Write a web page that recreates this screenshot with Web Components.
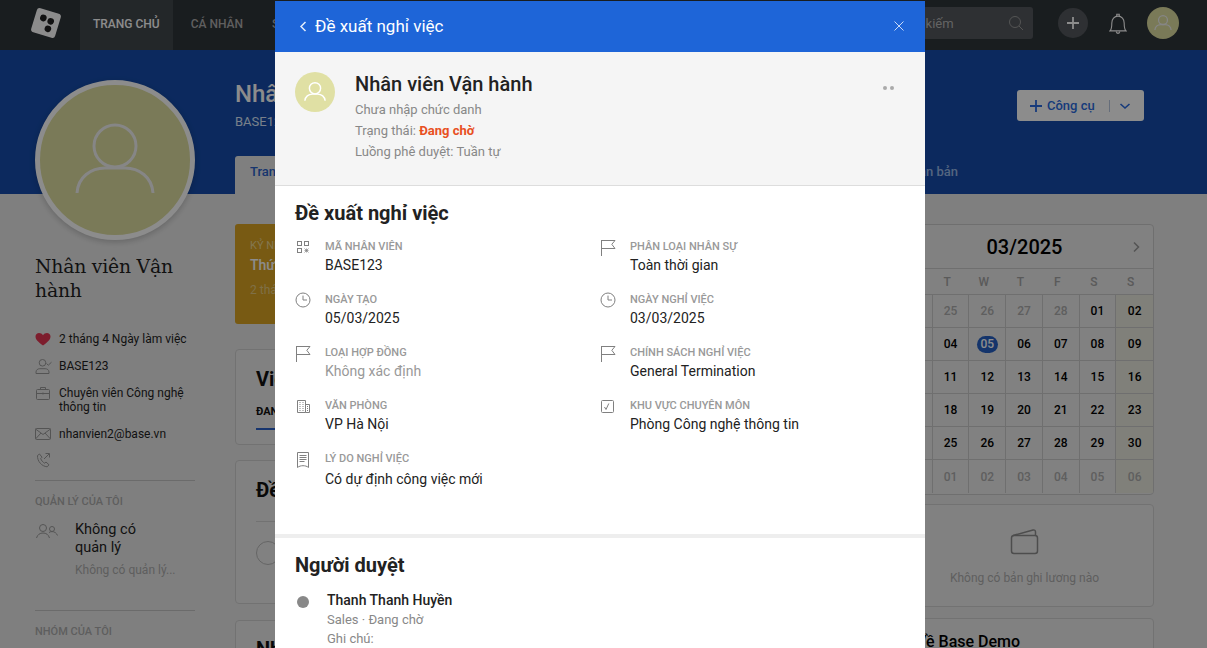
<!DOCTYPE html>
<html lang="vi">
<head>
<meta charset="utf-8">
<title>Đề xuất nghỉ việc</title>
<style>
html,body{margin:0;height:648px;overflow:hidden;background:#e8e8e8;font-family:Roboto,"Noto Sans",sans-serif;color:#222}
</style>
</head>
<body>
<app-page></app-page>
<modal-layer>
  <request-panel></request-panel>
</modal-layer>
<script>
const ICONS={
 flag:'<path d="M1.500 1v16M1.500 1.500H15l-3.200 3.800L15 9.500H1.500" fill="none" stroke="currentColor"/>',
 clock:'<circle cx="8" cy="8" r="7" fill="none" stroke="currentColor"/><path d="M8 3.600V8h4" fill="none" stroke="currentColor"/>',
 qr:'<g fill="none" stroke="currentColor"><rect x="2.500" y="2.500" width="4" height="4"/><rect x="9.500" y="2.500" width="4" height="4"/><rect x="2.500" y="9.500" width="4" height="4"/></g><path d="M9.500 9.500l4 4M13.500 9.500l-4 4M11.500 9.500v4M9.500 11.500h4" stroke="currentColor" stroke-width=".7"/>',
 building:'<path d="M2.500 2.500h8v12h-8zM10.500 6.500h4v8h-4" fill="none" stroke="currentColor"/><path d="M4.500 4.500h1M7.500 4.500h1M4.500 6.500h1M7.500 6.500h1M4.500 8.500h1M7.500 8.500h1M4.500 10.500h1M7.500 10.500h1M4.500 12.500h1M7.500 12.500h1M12 8.500h1M12 10.500h1M12 12.500h1" stroke="currentColor"/>',
 doc:'<path d="M2.500 1.500h11v15c-1.500-1.300-3.500-1.800-5.500-1.800s-4 .5-5.500 1.800z" fill="none" stroke="currentColor"/><path d="M4.500 4.500h7M4.500 6.500h7M4.500 8.500h7M4.500 10.500h5" stroke="currentColor"/>',
 check:'<rect x="1.500" y="2.500" width="12" height="12" rx="1" fill="none" stroke="currentColor"/><path d="M4.500 9l1.500 2.500 2.800-6" fill="none" stroke="currentColor"/>',
 back:'<path d="M10.500 4L6 8.500l4.500 4.500" fill="none" stroke="currentColor" stroke-width="1.500"/>',
 close:'<path d="M3.500 3.500l9 9M12.500 3.500l-9 9" fill="none" stroke="currentColor" stroke-width="1"/>',
 next:'<path d="M6 3.500L10.500 8 6 12.500" fill="none" stroke="currentColor" stroke-width="1.500"/>',
 search:'<circle cx="7" cy="7" r="5.500" fill="none" stroke="currentColor"/><path d="M11 11l4 4" stroke="currentColor"/>',
 plus:'<path d="M8 2v12M2 8h12" stroke="currentColor" stroke-width="1.800"/>',
 down:'<path d="M3.500 6l4.500 4 4.500-4" fill="none" stroke="currentColor" stroke-width="1.600"/>',
 bell:'<path d="M2.500 15c1.500-1.500 1.500-3 1.500-6.500C4 5.500 6 3 9 3s5 2.500 5 5.500c0 3.500 0 5 1.500 6.500z" fill="none" stroke="currentColor" stroke-width=".9"/><path d="M8 3V1.500h2V3M7.500 15.500c.3 1 .9 1.500 1.500 1.500s1.200-.5 1.500-1.500" fill="none" stroke="currentColor" stroke-width=".9"/>',
 heart:'<path d="M8 14.500C3 10.800.5 8.500.5 5.500.5 3.300 2.200 2 4 2c1.700 0 3.100.9 4 2.300C8.900 2.900 10.300 2 12 2c1.800 0 3.500 1.300 3.500 3.500 0 3-2.500 5.300-7.500 9z" fill="currentColor"/>',
 usercheck:'<circle cx="7.500" cy="4.800" r="3.300" fill="none" stroke="currentColor"/><path d="M1 15.500v-1.500c0-2 1.800-3.300 3.800-3.300h5.400c2 0 3.800 1.300 3.800 3.300v1.500z" fill="none" stroke="currentColor"/><path d="M11.500 5.500l1.800 1.700 3.200-3" fill="none" stroke="currentColor"/>',
 brief:'<rect x="1.500" y="4.500" width="13" height="10" rx="1" fill="none" stroke="currentColor"/><path d="M5.500 4.500V2.500h5v2M1.500 8.500h13M8 7.500v2" fill="none" stroke="currentColor"/>',
 mail:'<rect x=".5" y="2.500" width="15" height="11" rx="1" fill="none" stroke="currentColor"/><path d="M.5 3l7.500 5.500L15.500 3M.5 13l5.500-6M15.500 13l-5.500-6" fill="none" stroke="currentColor"/>',
 phone:'<path d="M2.500 3.500l2-1.500 2.500 3.200-1.300 1.300c.6 2 2 3.600 4 4.700l1.300-1.200 3 2.800-1.800 2c-5.500-.5-10-5.500-9.700-11.300z" fill="none" stroke="currentColor"/><path d="M9 7l5-5M10.500 1.500H14.500V5.500" fill="none" stroke="currentColor"/>',
 users:'<circle cx="7" cy="5" r="3.500" fill="none" stroke="currentColor"/><circle cx="16" cy="6" r="2.500" fill="none" stroke="currentColor"/><path d="M.5 15c1-3.500 3.500-5 6.500-5s5.500 1.500 6.500 5M13 9.500c.9-.6 1.900-.9 3-.9 2.500 0 4.500 1.400 5.500 3.900" fill="none" stroke="currentColor"/>',
 wallet:'<rect x="1.500" y="8.500" width="26" height="18" rx="2.500" fill="none" stroke="currentColor" stroke-width="1.500"/><path d="M3 8.500L23 3c1.500-.4 2.500.4 2.500 2v3.500" fill="none" stroke="currentColor" stroke-width="1.500"/>'
};
customElements.define('ui-icon',class extends HTMLElement{
  connectedCallback(){
    const n=this.getAttribute('name'),w=+this.getAttribute('w')||16,h=+this.getAttribute('h')||w,vb=this.getAttribute('vb')||`0 0 ${w} ${h}`;
    this.attachShadow({mode:'open'}).innerHTML=`<style>:host{display:inline-flex;flex:none;width:${w}px;height:${h}px}svg{display:block}</style><svg width="${w}" height="${h}" viewBox="${vb}">${ICONS[n]}</svg>`;
  }
});
customElements.define('person-avatar',class extends HTMLElement{
  connectedCallback(){
    const s=+this.getAttribute('size')||40,sw=+this.getAttribute('stroke')||5,c=this.getAttribute('line')||'#fff',bg=this.getAttribute('fill')||'#e0e0a4',b=+this.getAttribute('ring')||0;
    this.attachShadow({mode:'open'}).innerHTML=`<style>:host{display:block;flex:none;box-sizing:border-box;width:${s}px;height:${s}px;border-radius:50%;background:${bg};overflow:hidden;${b?`border:${b}px solid #fff;box-shadow:0 2px 6px rgba(0,0,0,.2);`:''}}svg{display:block;width:100%;height:100%}</style><svg viewBox="5 5 150 150"><circle cx="80" cy="66" r="21" fill="none" stroke="${c}" stroke-width="${sw}"/><path d="M42 113C43 97 56 88 70 88H90C104 88 117 97 118 113" fill="none" stroke="${c}" stroke-width="${sw}"/></svg>`;
  }
});
function def(name,css,html){
  customElements.define(name,class extends HTMLElement{
    constructor(){super();this.attachShadow({mode:'open'}).innerHTML=`<style>${css}</style>${typeof html==='function'?html():html}`;}
  });
}
def('top-bar',`
:host{display:flex;align-items:stretch;height:50px;background:#2f3539;color:#fff;flex:none}
.logo{width:80px;display:flex;align-items:center;padding-left:30px;box-sizing:border-box}
.logo svg{display:block;margin-top:-5px}
a{display:flex;align-items:center;font-size:12px;font-weight:500;color:#adadad;padding:0 18px 3px 18px}
a.on{background:#41474c;color:#fff;padding:0 13px 3px}
a+a{padding-left:18px;padding-right:11px}
.r{margin-left:auto;display:flex;align-items:center;padding:0 28px 4px 0}
.s{width:145px;height:32px;box-sizing:border-box;background:#54585d;border-radius:3px;display:flex;align-items:center;padding:0 9px 0 12px;font-size:13px;color:#b6b6b6;justify-content:space-between;margin-right:25px}
.s ui-icon{color:#9a9a9a}
.p{width:30px;height:30px;border-radius:50%;background:#54585d;display:flex;align-items:center;justify-content:center;color:#fff;margin-right:21px}
.b{color:#fff;margin-right:20px;display:flex}
`,`<div class="logo"><svg width="32" height="32" viewBox="0 0 32 32"><g transform="rotate(17 16 16)"><rect x="3.500" y="3.500" width="25" height="25" rx="3" fill="#fff"/><circle cx="12" cy="12" r="3.300" fill="#222"/><circle cx="20" cy="13" r="3.300" fill="#222"/><circle cx="19.500" cy="21" r="3.300" fill="#222"/></g></svg></div>
<a class="on">TRANG CHỦ</a><a>CÁ NHÂN</a><a>SƠ ĐỒ</a>
<div class="r"><div class="s"><span>Tìm kiếm</span><ui-icon name="search"></ui-icon></div><div class="p"><ui-icon name="plus"></ui-icon></div><div class="b"><ui-icon name="bell" w="18" h="21" vb="2 .5 14 17"></ui-icon></div><person-avatar size="32" stroke="6" fill="#dedea0" line="#f4f4f4"></person-avatar></div>`);

def('hero-band',`
:host{display:block;height:144px;box-sizing:border-box;background:#164cab;padding:28px 63px 0 235px;flex:none;color:#fff}
.h{display:flex;justify-content:space-between;align-items:flex-start}
h1{margin:0;font-size:24px;line-height:32px;font-weight:500;color:#fff}
.c{margin-top:3px;font-size:13px;line-height:18px;color:#dce8fb}
.btn{margin-top:12px;width:127px;height:31px;box-sizing:border-box;background:#fff;border-radius:3px;display:flex;align-items:center;padding:0 12px;color:#2a6be0;font-size:13px;font-weight:500;white-space:nowrap}
.btn span{margin-left:4px;flex:none}
.btn i{width:1px;height:12px;background:#b8c6de;margin:0 8px 0 14px;flex:none}
.tabs{display:flex;justify-content:space-between;padding-right:171px;margin-top:25px;height:38px}
.tab{display:flex;align-items:center;padding:0 15px 8px;font-size:13px;font-weight:500;color:#9ab8e8}
.tab.on{background:#e8e8e8;border-radius:3px 3px 0 0;color:#2a62c8}
`,`<div class="h"><div><h1>Nhân viên</h1><div class="c">BASE123</div></div><div class="btn"><ui-icon name="plus" w="14" h="14" vb="1 1 14 14"></ui-icon><span>Công cụ</span><i></i><ui-icon name="down" w="14" h="14" vb="1 1 14 14"></ui-icon></div></div>
<div class="tabs"><div class="tab on">Trang chủ</div><div class="tab">Văn bản</div></div>`);

def('side-item',`
:host{display:flex;align-items:flex-start;font-size:12px;line-height:14px;color:#1f1f1f;margin-bottom:13px}
.i{width:24px;flex:none;color:#9a9a9a;display:flex;height:14px;align-items:center}
`,`<div class="i"><slot name="icon"></slot></div><div><slot></slot></div>`);

def('side-col',`
:host{display:block;width:160px;flex:none}
h2{margin:15px 0 0;font:400 18.800px/24px "DejaVu Serif",serif;color:#1f1f1f;letter-spacing:-.2px}
.list{margin-top:29px}
hr{border:0;border-top:1px solid #c4c4c4;margin:11px 0 0}
.cap{font-size:11px;line-height:14px;color:#acacac;font-weight:500;margin-top:14px}
.mgr{display:flex;margin-top:12px}
.mgr .ic{width:40px;color:#9a9a9a;padding-top:2px}
.n{font-size:14.500px;line-height:18px;color:#1f1f1f;width:90px}
.d{font-size:12px;line-height:14px;color:#acacac;margin-top:6px;white-space:nowrap}
.h2{margin-top:33px}
`,`<person-avatar size="160" ring="5" stroke="3" fill="#dedea0" line="#f4f4f4"></person-avatar>
<h2>Nhân viên Vận hành</h2>
<div class="list">
<side-item><ui-icon slot="icon" name="heart" style="color:#e33652"></ui-icon>2 tháng 4 Ngày làm việc</side-item>
<side-item><ui-icon slot="icon" name="usercheck" w="17" h="16"></ui-icon>BASE123</side-item>
<side-item><ui-icon slot="icon" name="brief"></ui-icon>Chuyên viên Công nghệ<br>thông tin</side-item>
<side-item style="margin-bottom:12px"><ui-icon slot="icon" name="mail"></ui-icon>nhanvien2@base.vn</side-item>
<side-item><ui-icon slot="icon" name="phone"></ui-icon>&nbsp;</side-item>
</div>
<hr>
<div class="cap">QUẢN LÝ CỦA TÔI</div>
<div class="mgr"><div class="ic"><ui-icon name="users" w="24" h="16" vb="0 0 22 16"></ui-icon></div><div><div class="n">Không có quản lý</div><div class="d">Không có quản lý...</div></div></div>
<hr class="h2">
<div class="cap">NHÓM CỦA TÔI</div>`);

def('plain-card',`
:host{display:block;box-sizing:border-box;border:1px solid #d0d0d0;border-radius:4px;background:#ebebeb;overflow:hidden}
`,`<slot></slot>`);

def('main-col',`
:host{display:block;width:645px;flex:none;padding-top:30px;color:#1f1f1f}
.ban{height:100px;background:#daa424;border-radius:3px;padding:15px 15px;box-sizing:border-box;color:#fff}
.ban .k{font-size:11px;line-height:14px;color:#f0d890}
.ban .t{font-size:14px;font-weight:500;line-height:20px;margin-top:2px;color:#fff}
.ban .m{font-size:12px;line-height:16px;margin-top:7px;color:#e8cc80}
plain-card{margin-top:25px;padding:0 20px}
h3{margin:0;font-size:20px;line-height:28px;font-weight:700;color:#111}
.c1{height:96px;padding-top:15px}
.tab{display:inline-block;font-size:11px;font-weight:700;line-height:14px;margin-top:12px;padding-bottom:9px;border-bottom:2px solid #2a62c8;color:#111}
.c2{height:144px;margin-top:15px;padding-top:15px}
.c2 hr{border:0;border-top:1px solid #d0d0d0;margin:17px 0 0}
.ring{width:24px;height:24px;border:1px solid #b8b8b8;border-radius:50%;box-sizing:border-box;margin-top:19px}
.c3{height:60px;margin-top:16px;padding-top:14px}
`,`<div class="ban"><div class="k">KỶ NIỆM</div><div class="t">Thứ Tư</div><div class="m">2 tháng</div></div>
<plain-card class="c1"><h3>Việc</h3><div class="tab">ĐANG LÀM</div></plain-card>
<plain-card class="c2"><h3>Đề xuất</h3><hr><div class="ring"></div></plain-card>
<plain-card class="c3"><h3>Nhóm</h3></plain-card>`);

def('month-calendar',`
:host{display:block;box-sizing:border-box;height:271px;border:1px solid #cacaca;border-radius:4px;background:#ebebeb;overflow:hidden}
.t{height:44px;display:flex;align-items:center;justify-content:center;position:relative;font-size:20px;font-weight:500;color:#000;border-bottom:1px solid #cacaca;box-sizing:border-box}
.t ui-icon{position:absolute;right:9px;color:#999}
.g{display:grid;grid-template-columns:repeat(7,1fr)}
.w{height:26px;display:flex;align-items:center;justify-content:center;padding-right:8px;font-size:12px;color:#a4a4a4;font-weight:500;border-bottom:1px solid #cacaca;box-sizing:border-box}
.d{height:33px;box-sizing:border-box;display:flex;align-items:center;justify-content:center;font-size:12px;font-weight:500;color:#000;border-right:1px solid #cacaca;border-bottom:1px solid #cacaca}
.d:nth-child(7n){border-right:0;background:#e9e9de}
.d.o{color:#adadad}
.d:nth-last-child(-n+7){border-bottom:0}
.d b{font-weight:500;background:#2660c4;color:#fff;border-radius:9px;width:21px;height:17px;display:flex;align-items:center;justify-content:center}
`,()=>{
  const o=n=>String(n).padStart(2,'0');
  const all=[[24,1],[25,1],[26,1],[27,1],[28,1],[1,0],[2,0]];
  for(let i=3;i<=30;i++)all.push([i,0]);
  all.push([31,1]);for(let i=1;i<=6;i++)all.push([i,1]);
  return `<div class="t">03/2025<ui-icon name="next"></ui-icon></div><div class="g">${['M','T','W','T','F','S','S'].map(w=>`<div class="w">${w}</div>`).join('')}</div><div class="g">${all.map(([n,g])=>`<div class="d${g?' o':''}">${!g&&n===5?'<b>05</b>':o(n)}</div>`).join('')}</div>`;
});

def('right-col',`
:host{display:block;width:259px;flex:none;margin-left:15px;padding-top:30px;color:#222}
.sal{height:103px;margin-top:9px;padding-top:22px;text-align:center;font-size:12px;line-height:14px;color:#adadad}
.sal ui-icon{color:#8c8c8c;margin-bottom:16px}
.c{height:60px;margin-top:11px;padding:13px 20px 0;font-size:16px;font-weight:500;color:#000;line-height:20px}
`,`<month-calendar></month-calendar>
<plain-card class="sal"><ui-icon name="wallet" w="29" h="28"></ui-icon><div>Không có bản ghi lương nào</div></plain-card>
<plain-card class="c">Về Base Demo</plain-card>`);

def('app-page',`
:host{display:flex;flex-direction:column;height:648px;overflow:hidden;background:#e8e8e8}
.row{display:flex;align-items:flex-start;padding-left:35px;position:relative;margin-top:-114px}
main-col{margin-left:40px}
main-col,right-col{margin-top:114px}
`,`<top-bar></top-bar><hero-band></hero-band><div class="row"><side-col></side-col><main-col></main-col><right-col></right-col></div>`);

def('modal-layer',`
:host{position:fixed;inset:0;background:rgba(0,0,0,.45);display:flex;justify-content:center;padding:1px 7px 0 0;box-sizing:border-box;overflow:hidden}
`,`<slot></slot>`);

def('info-field',`
:host{display:grid;grid-template-columns:30px 1fr;min-height:36px}
.i{color:#808080;grid-row:1/3}
.l{font-size:11px;line-height:14px;font-weight:500;color:#999;padding-top:1px}
.v{font-size:14px;line-height:20px;color:#222;margin-top:1px}
:host([muted]) .v{color:#999}
:host([low]) .v{margin-top:3px}
`,`<div class="i"><slot name="icon"></slot></div><div class="l"><slot name="label"></slot></div><div class="v"><slot></slot></div>`);

def('request-panel',`
:host{display:block;width:650px;flex:none;background:#fff;height:700px;color:#222}
.bar{height:51px;background:#1e65d8;color:#fff;display:flex;align-items:center;padding:0 18px 0 20px;font-size:17px;font-weight:400}
.bar span{flex:1;margin-left:4px;margin-top:-1px}
.bar ui-icon{color:#e4edfb;margin-top:-1px}
.bar ui-icon[name=close]{color:#c8daf8}
.head{height:134px;box-sizing:border-box;background:#f5f5f5;border-bottom:1px solid #ddd;padding:20px 25px 0 20px;display:flex}
.info{margin-left:20px;flex:1}
.nm{font-size:20px;line-height:24px;font-weight:500;color:#222}
.ln{font-size:13px;line-height:21px;color:#888;position:relative;top:3px}
.ln b{color:#e8501f;font-weight:700}
.more{display:flex;gap:3px;margin:14px 6px 0 0;height:4px}
.more i{width:4px;height:4px;border-radius:50%;background:#aaa}
.sec{height:352px;box-sizing:border-box;padding:13px 20px 0;border-bottom:4px solid #eee}
h3{margin:0;font-size:20px;line-height:28px;font-weight:700;color:#222}
.grid{display:grid;grid-template-columns:305px 1fr;row-gap:17px;margin-top:12px}
.sec2{padding:13px 20px 0}
.ap{display:flex;margin-top:12px}
.dot{width:12px;height:12px;border-radius:50%;background:#888;margin:5px 18px 0 2px;flex:none}
.an{font-size:14px;line-height:19px;font-weight:500;color:#222}
.am{font-size:13px;line-height:19px;color:#888}
`,`<div class="bar"><ui-icon name="back"></ui-icon><span>Đề xuất nghỉ việc</span><ui-icon name="close"></ui-icon></div>
<div class="head"><person-avatar size="40" stroke="5.500"></person-avatar><div class="info"><div class="nm">Nhân viên Vận hành</div><div class="ln">Chưa nhập chức danh</div><div class="ln">Trạng thái: <b>Đang chờ</b></div><div class="ln">Luồng phê duyệt: Tuần tự</div></div><div class="more"><i></i><i></i></div></div>
<div class="sec"><h3>Đề xuất nghỉ việc</h3><div class="grid">
<info-field><ui-icon slot="icon" name="qr"></ui-icon><span slot="label">MÃ NHÂN VIÊN</span>BASE123</info-field>
<info-field><ui-icon slot="icon" name="flag" w="16" h="18"></ui-icon><span slot="label">PHÂN LOẠI NHÂN SỰ</span>Toàn thời gian</info-field>
<info-field><ui-icon slot="icon" name="clock"></ui-icon><span slot="label">NGÀY TẠO</span>05/03/2025</info-field>
<info-field><ui-icon slot="icon" name="clock"></ui-icon><span slot="label">NGÀY NGHỈ VIỆC</span>03/03/2025</info-field>
<info-field muted><ui-icon slot="icon" name="flag" w="16" h="18"></ui-icon><span slot="label">LOẠI HỢP ĐỒNG</span>Không xác định</info-field>
<info-field><ui-icon slot="icon" name="flag" w="16" h="18"></ui-icon><span slot="label">CHÍNH SÁCH NGHỈ VIỆC</span>General Termination</info-field>
<info-field><ui-icon slot="icon" name="building"></ui-icon><span slot="label">VĂN PHÒNG</span>VP Hà Nội</info-field>
<info-field><ui-icon slot="icon" name="check"></ui-icon><span slot="label">KHU VỰC CHUYÊN MÔN</span>Phòng Công nghệ thông tin</info-field>
<info-field low><ui-icon slot="icon" name="doc" w="16" h="18"></ui-icon><span slot="label">LÝ DO NGHỈ VIỆC</span>Có dự định công việc mới</info-field>
</div></div>
<div class="sec2"><h3>Người duyệt</h3><div class="ap"><div class="dot"></div><div><div class="an">Thanh Thanh Huyền</div><div class="am">Sales · Đang chờ</div><div class="am">Ghi chú:</div></div></div></div>`);
</script>
</body>
</html>
